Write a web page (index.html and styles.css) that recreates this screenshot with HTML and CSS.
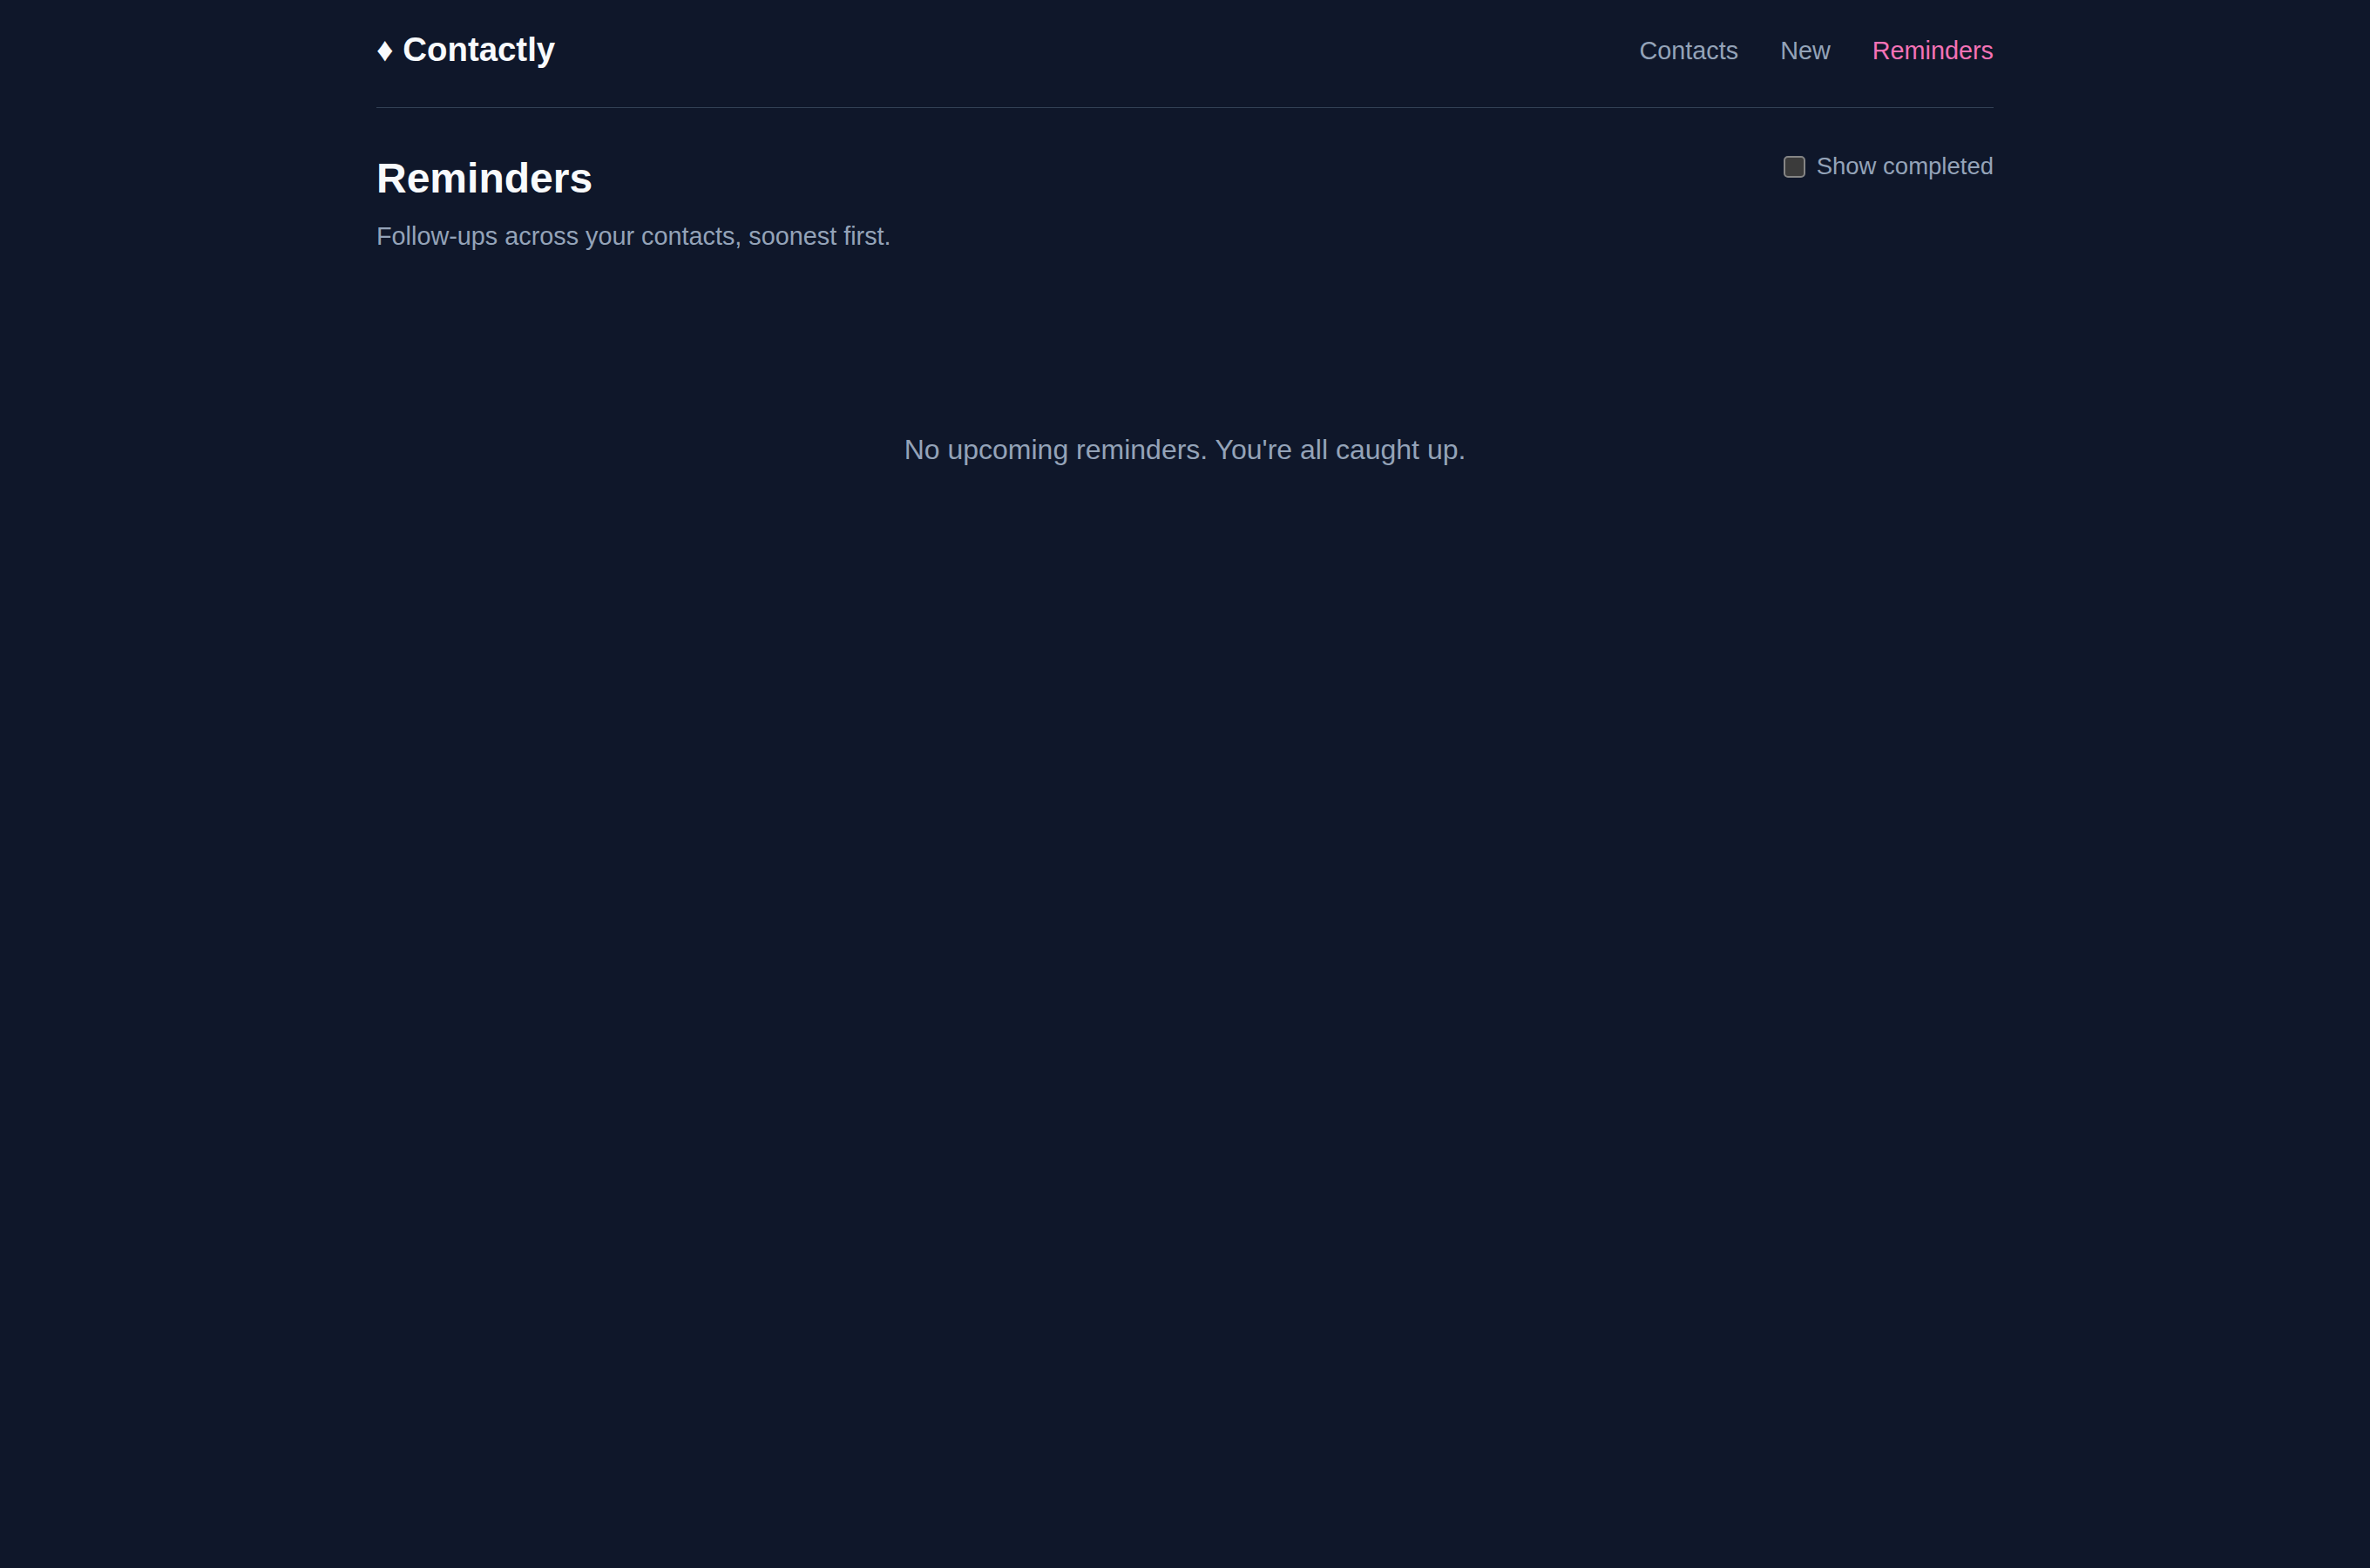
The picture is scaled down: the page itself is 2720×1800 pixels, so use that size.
FILE: index.html
```html
<!DOCTYPE html>
<html lang="en">
<head>
    <meta charset="UTF-8">
    <meta name="viewport" content="width=device-width, initial-scale=1.0">
    <title>Reminders - Contactly</title>
    <link rel="stylesheet" href="styles.css">
</head>
<body>
    <div class="container">
        <header class="site-header">
            <a href="#" class="logo">&#9830; Contactly</a>
            <nav class="nav">
                <a href="#">Contacts</a>
                <a href="#">New</a>
                <a href="#" class="active">Reminders</a>
            </nav>
        </header>

        <main>
            <div class="page-head">
                <div>
                    <h1>Reminders</h1>
                    <p class="subtitle">Follow-ups across your contacts, soonest first.</p>
                </div>
                <label class="toggle">
                    <input type="checkbox" id="show-completed">
                    <span>Show completed</span>
                </label>
            </div>

            <p class="empty">No upcoming reminders. You're all caught up.</p>
        </main>
    </div>
</body>
</html>
```

FILE: styles.css
```css
* {
    margin: 0;
    padding: 0;
    box-sizing: border-box;
}

body {
    font-family: "Liberation Sans", Arial, sans-serif;
    background-color: #0f172a;
    color: #f1f5f9;
    min-height: 100vh;
}

.container {
    max-width: 1856px;
    margin: 0 auto;
}

/* Top bar */
.site-header {
    display: flex;
    justify-content: space-between;
    align-items: center;
    padding: 35px 0 44px;
    border-bottom: 1px solid #334155;
}

.logo {
    font-size: 38.4px;
    font-weight: bold;
    color: #f8fafc;
    text-decoration: none;
}

.nav {
    display: flex;
    gap: 48px;
    padding-top: 3px;
}

.nav a {
    font-size: 28.8px;
    color: #94a3b8;
    text-decoration: none;
}

.nav a.active {
    color: #f472b6;
}

/* Page heading */
.page-head {
    display: flex;
    justify-content: space-between;
    align-items: flex-start;
    padding-top: 53px;
}

.page-head h1 {
    font-size: 48px;
    font-weight: bold;
    color: #f8fafc;
}

.subtitle {
    margin-top: 23px;
    font-size: 28.8px;
    color: #94a3b8;
}

.toggle {
    display: flex;
    align-items: center;
    gap: 13px;
    margin-top: -2px;
    font-size: 27.5px;
    color: #94a3b8;
    cursor: pointer;
}

.toggle input {
    appearance: none;
    width: 25px;
    height: 25px;
    background-color: #3b3b3b;
    border: 2px solid #858585;
    border-radius: 5px;
    cursor: pointer;
}

.toggle input:checked {
    background-color: #f472b6;
    border-color: #f472b6;
}

.empty {
    margin-top: 210px;
    text-align: center;
    font-size: 32px;
    color: #94a3b8;
}
```
